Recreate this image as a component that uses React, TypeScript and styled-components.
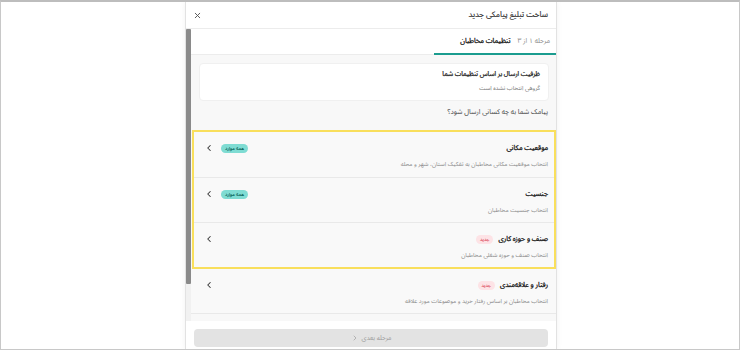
import React from "react";
import styled, { createGlobalStyle } from "styled-components";
import { ChevronLeft, ChevronRight, X } from "lucide-react";

const Global = createGlobalStyle`
  html, body { margin: 0; padding: 0; background: #fff; }
  body { font-family: "Noto Sans Arabic", "Vazirmatn", "DejaVu Sans Condensed", "DejaVu Sans", sans-serif; }
  * { box-sizing: border-box; }
`;

const Page = styled.div`
  width: 740px;
  height: 350px;
  border: 1px solid #c8c8c8;
  border-top: 2px solid #bdbdbd;
  display: flex;
  justify-content: center;
  overflow: hidden;
  background: #fff;
`;

const Modal = styled.div`
  width: 372px;
  margin-left: 2px;
  height: 100%;
  display: flex;
  flex-direction: column;
  background: #fff;
  border-left: 1px solid #e2e2e2;
  border-right: 1px solid #e2e2e2;
  box-shadow: 0 0 6px rgba(0, 0, 0, 0.06);
  direction: rtl;
`;

const Header = styled.div`
  height: 27px;
  flex: none;
  display: flex;
  align-items: center;
  justify-content: space-between;
  padding: 0 8px 0 7px;
  border-bottom: 1px solid #ececec;
`;

const Title = styled.div`
  font-size: 7.9px;
  line-height: 12px;
  color: #333;
  -webkit-text-stroke: 0.15px #333;
`;

const CloseBtn = styled.button`
  border: 0;
  background: none;
  padding: 0;
  color: #555;
  display: flex;
  cursor: pointer;
`;

const Body = styled.div`
  flex: 1;
  min-height: 0;
  display: flex;
  flex-direction: row;
`;

const Scroll = styled.div`
  flex: 1;
  min-width: 0;
  display: flex;
  flex-direction: column;
  overflow: hidden;
  background: #f8f8f8;
  & > * { flex: none; }
`;

const Track = styled.div`
  width: 5px;
  flex: none;
  background: #f1f1f1;
  display: flex;
  flex-direction: column;
`;

const Thumb = styled.div`
  height: 255px;
  background: #8a8a8a;
  border-radius: 1px;
`;

const Tabs = styled.div`
  height: 26px;
  background: #fff;
  display: flex;
  align-items: stretch;
  border-bottom: 1px solid #ececec;
`;

const ActiveTab = styled.div`
  width: 122px;
  display: flex;
  align-items: center;
  gap: 7px;
  padding-right: 6px;
  border-bottom: 2px solid #1b9c8f;
  margin-bottom: -1px;
  white-space: nowrap;
  line-height: 10px;
`;

const StepText = styled.span`
  font-size: 6.8px;
  color: #888;
`;

const TabLabel = styled.span`
  font-size: 6.9px;
  color: #222;
  -webkit-text-stroke: 0.3px #222;
`;

const Inner = styled.div`
  padding: 8px 7px 0 8px;
`;

const InfoCard = styled.div`
  background: #fff;
  border-radius: 4px;
  border: 1px solid #f0f0f0;
  height: 38px;
  padding: 5px 8px 0;
  display: flex;
  flex-direction: column;
  gap: 4px;
  line-height: 10px;
`;

const CardTitle = styled.div`
  font-size: 6.5px;
  color: #222;
  -webkit-text-stroke: 0.25px #222;
`;

const CardSub = styled.div`
  font-size: 5.9px;
  color: #777;
`;

const Question = styled.div`
  font-size: 6.9px;
  line-height: 10px;
  color: #444;
  padding: 6px 1px 0;
  height: 29px;
`;

const Highlight = styled.div`
  border: 2px solid #f9df5c;
  margin-left: 1px;
`;

const Row = styled.div<{ $h: number; $line?: boolean; $outer?: boolean }>`
  height: ${(p) => p.$h}px;
  display: flex;
  align-items: flex-start;
  justify-content: space-between;
  padding: ${(p) => (p.$outer ? "11px 8px 0 13px" : "11px 6px 0 10px")};
  border-bottom: ${(p) => (p.$line ? "1px solid #e9e9e9" : "0")};
  background: #f9f9f9;
  line-height: 10px;
`;

const RowMain = styled.div`
  display: flex;
  flex-direction: column;
  gap: 6px;
`;

const RowTitleLine = styled.div`
  display: flex;
  align-items: center;
  gap: 5px;
`;

const RowTitle = styled.div`
  font-size: 6.9px;
  color: #222;
  -webkit-text-stroke: 0.3px #222;
`;

const RowSub = styled.div`
  font-size: 6px;
  color: #8a8a8a;
`;

const RowSide = styled.div`
  display: flex;
  align-items: center;
  gap: 7px;
  color: #333;
`;

const Badge = styled.span<{ $tone: "teal" | "new" }>`
  font-size: 4.8px;
  padding: 0 4px;
  border-radius: 8px;
  line-height: 9px;
  background: ${(p) => (p.$tone === "teal" ? "#7fdcd3" : "#fde3e6")};
  color: ${(p) => (p.$tone === "teal" ? "#0f6a62" : "#e15a6d")};
  -webkit-text-stroke: 0.15px currentColor;
`;

const Footer = styled.div`
  flex: none;
  height: 28px;
  background: #fff;
  padding: 8px 8px 2px 8px;
`;

const NextButton = styled.button`
  width: 100%;
  height: 18px;
  border: 0;
  border-radius: 4px;
  background: #e3e3e3;
  color: #9a9a9a;
  font-family: inherit;
  font-size: 6.5px;
  display: flex;
  align-items: center;
  justify-content: center;
  gap: 3px;
  direction: rtl;
`;

type Item = { title: string; sub: string; tag?: string; value?: string };

const items: Item[] = [
  { title: "موقعیت مکانی", sub: "انتخاب موقعیت مکانی مخاطبان به تفکیک استان، شهر و محله", value: "همه موارد" },
  { title: "جنسیت", sub: "انتخاب جنسیت مخاطبان", value: "همه موارد" },
  { title: "صنف و حوزه کاری", sub: "انتخاب صنف و حوزه شغلی مخاطبان", tag: "جدید" },
];

const rowHeights = [46, 45, 44];

const ItemRow: React.FC<{ item: Item; h: number; line?: boolean; outer?: boolean }> = ({ item, h, line, outer }) => (
  <Row $h={h} $line={line} $outer={outer}>
    <RowMain>
      <RowTitleLine>
        <RowTitle>{item.title}</RowTitle>
        {item.tag && <Badge $tone="new">{item.tag}</Badge>}
      </RowTitleLine>
      <RowSub>{item.sub}</RowSub>
    </RowMain>
    <RowSide>
      {item.value && <Badge $tone="teal">{item.value}</Badge>}
      <ChevronLeft size={10} strokeWidth={2.5} />
    </RowSide>
  </Row>
);

export default function App() {
  return (
    <>
      <Global />
      <Page>
        <Modal>
          <Header>
            <Title>ساخت تبلیغ پیامکی جدید</Title>
            <CloseBtn aria-label="close">
              <X size={9} strokeWidth={2.5} />
            </CloseBtn>
          </Header>
          <Body>
            <Scroll>
              <Tabs>
                <ActiveTab>
                  <StepText>مرحله ۱ از ۳</StepText>
                  <TabLabel>تنظیمات مخاطبان</TabLabel>
                </ActiveTab>
              </Tabs>
              <Inner>
                <InfoCard>
                  <CardTitle>ظرفیت ارسال بر اساس تنظیمات شما</CardTitle>
                  <CardSub>گروهی انتخاب نشده است</CardSub>
                </InfoCard>
                <Question>پیامک شما به چه کسانی ارسال شود؟</Question>
              </Inner>
              <Highlight>
                {items.map((it, i) => (
                  <ItemRow key={it.title} item={it} h={rowHeights[i]} line={i < items.length - 1} />
                ))}
              </Highlight>
              <ItemRow
                h={45}
                line
                outer
                item={{
                  title: "رفتار و علاقه‌مندی",
                  sub: "انتخاب مخاطبان بر اساس رفتار خرید و موضوعات مورد علاقه",
                  tag: "جدید",
                }}
              />
            </Scroll>
            <Track>
              <Thumb />
            </Track>
          </Body>
          <Footer>
            <NextButton>
              مرحله بعدی
              <ChevronRight size={8} />
            </NextButton>
          </Footer>
        </Modal>
      </Page>
    </>
  );
}
